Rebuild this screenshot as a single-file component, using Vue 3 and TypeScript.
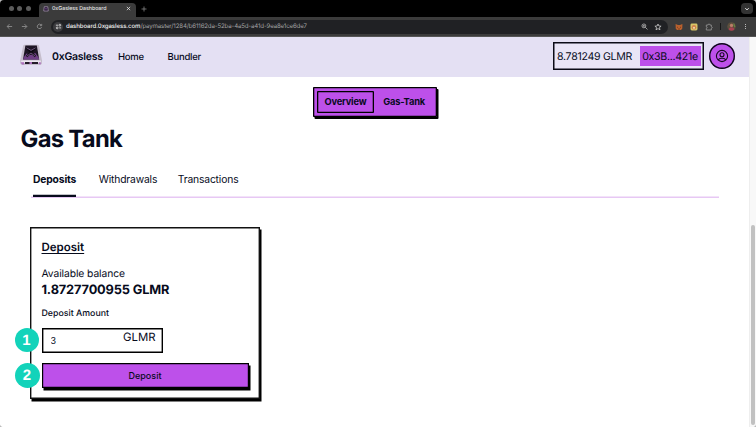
<script setup lang="ts">
import { ref } from 'vue'

const amount = ref('3')
const tabs = ['Deposits', 'Withdrawals', 'Transactions']
const activeTab = ref('Deposits')
const sections = ['Overview', 'Gas-Tank']
</script>

<template>
  <div class="window">
    <div class="tabstrip">
      <div class="lights"><i></i><i></i><i></i></div>
      <div class="browser-tab">
        <svg class="favicon" viewBox="0 0 12 12"><path d="M2.5 1.5h7l1 8.5h-9z" fill="#1c1524" stroke="#b9a3c9" stroke-width="1.3" /><path d="M4 4l4 3M8 4L4 7" stroke="#8a4fa8" /></svg>
        <span class="tab-title">0xGasless Dashboard</span>
        <svg class="close" viewBox="0 0 6 6"><path d="M1 1l4 4M5 1L1 5" /></svg>
      </div>
      <svg class="plus" viewBox="0 0 6 6"><path d="M3 .5v5M.5 3h5" /></svg>
      <div class="chevron"><svg viewBox="0 0 6 6"><path d="M1.3 2.2L3 3.9l1.7-1.7" /></svg></div>
    </div>

    <div class="toolbar">
      <svg class="nav" viewBox="0 0 8 8"><path d="M7 4H1.5M4 1.3L1.3 4 4 6.7" /></svg>
      <svg class="nav" viewBox="0 0 8 8"><path d="M1 4h5.5M4 1.3L6.7 4 4 6.7" /></svg>
      <svg class="nav" viewBox="0 0 8 8"><path d="M6.4 4.6A2.5 2.5 0 1 1 5.8 2.2M6.5 1v2H4.4" /></svg>
      <div class="address">
        <div class="site"><svg viewBox="0 0 8 8"><path d="M1 2.5h2.5M4.8 5.6H7" /><circle cx="5.5" cy="2.5" r="1" /><circle cx="2.5" cy="5.6" r="1" /></svg></div>
        <span class="url"><b>dashboard.0xgasless.com</b>/paymaster/1284/b61162da-52ba-4a5d-a41d-9ea8e1ce6de7</span>
        <svg class="zoom" viewBox="0 0 8 8"><circle cx="3.3" cy="3.3" r="2.2" /><path d="M4.9 4.9L7.4 7.4M2.3 3.3h2M3.3 2.3v2" /></svg>
        <svg class="star" viewBox="0 0 8 8"><path d="M4 1l.9 2 2.2.2-1.7 1.4.6 2.2L4 5.6 2 6.8l.6-2.2L.9 3.2 3.1 3z" /></svg>
      </div>
      <svg class="fox" viewBox="0 0 8 8"><path d="M.6 1l2.4 1h2l2.4-1-.1 4.5L6 7H2L.7 5.5z" fill="#b9602d" /><path d="M2 4l1 .6M6 4l-1 .6M3 6h2" stroke="#6b3a20" stroke-width=".8" /></svg>
      <svg class="bear" viewBox="0 0 8 8"><rect x=".5" y=".5" width="7" height="7" rx="1.4" fill="#d6c568" /><circle cx="4" cy="4.2" r="2.3" fill="#cf7f4a" /><circle cx="4" cy="4.8" r="1.1" fill="#ecd9a8" /></svg>
      <svg class="puzzle" viewBox="0 0 8 8"><path d="M1.3 2h1.8c0-1.4 1.8-1.4 1.8 0h1.4v1.7c1.3 0 1.3 1.6 0 1.6V7h-5V5.4c1.2 0 1.2-1.6 0-1.6z" /></svg>
      <i class="divider"></i>
      <svg class="profile" viewBox="0 0 8 8"><circle cx="4" cy="4" r="3.8" fill="#5d4f3d" /><circle cx="4" cy="3" r="1.5" fill="#b97f68" /><path d="M1.5 6.8C2 4 6 4 6.5 6.8 5 8 3 8 1.5 6.8" fill="#a84052" /><path d="M6 1.5l1 3" stroke="#638a43" /></svg>
      <div class="dots"><i></i><i></i><i></i></div>
    </div>

    <div class="viewport">
      <div class="page">
        <header class="header">
          <svg class="logo" viewBox="0 0 24 22">
            <path d="M5.6.8h12.9q1.3 0 1.6 1.2L23 16.3v3.5L21.5 21H3L1.2 19.8v-3.5L4.1 2Q4.4.8 5.6.8z" fill="#c6becd" />
            <path d="M6.4 1.6h11.4L20.2 15.6H4z" fill="#1d1524" />
            <path d="M4.6 13.5L7.5 9.5l4.3 1.6 4.5-2.2 3.5 4.8.4 1.9H4.2z" fill="#6e3f84" />
            <path d="M7.6 4l8.8 8.5M16.6 4l-9 8.5" stroke="#0d0912" stroke-width="1.8" />
            <path d="M7.6 3.8l4.4 2.6 4.6-2.6M8 12l4-3 4 3" stroke="#80668f" stroke-width=".8" />
            <path d="M2.2 16.6h19.6V19H2.2z" fill="#ece6f0" />
            <path d="M6 18h13v2H6z" fill="#241c2a" />
            <path d="M1.5 18.2h3.6v2.2H3zM10.5 18h2.5v2h-2.5zM19.8 18.2h2v2h-2z" fill="#ad70bd" />
          </svg>
          <span class="brand">0xGasless</span>
          <a class="home">Home</a>
          <a class="bundler">Bundler</a>
          <div class="wallet"><span class="balance">8.781249 GLMR</span><span class="account">0x3B...421e</span></div>
          <button class="avatar"><svg viewBox="0 0 14 14"><circle cx="7" cy="7" r="5.6" /><circle cx="7" cy="5.7" r="2" /><path d="M3.4 11C4 8.7 10 8.7 10.6 11" /></svg></button>
        </header>

        <nav class="switcher">
          <button v-for="(s, i) in sections" :key="s" :class="{ selected: i === 0 }">{{ s }}</button>
        </nav>

        <h1>Gas Tank</h1>

        <div class="tabs">
          <button v-for="t in tabs" :key="t" :class="{ active: t === activeTab }" @click="activeTab = t">{{ t }}</button>
        </div>

        <section class="card">
          <h2>Deposit</h2>
          <p class="label">Available balance</p>
          <p class="amount">1.8727700955 GLMR</p>
          <p class="field-label">Deposit Amount</p>
          <div class="field"><input v-model="amount" aria-label="Deposit Amount" /><span>GLMR</span></div>
          <button class="submit">Deposit</button>
          <span class="step one">1</span>
          <span class="step two">2</span>
        </section>
      </div>
      <div class="scrollbar"><i></i></div>
    </div>
  </div>
</template>

<style>
body { margin: 0; overflow: hidden; background: #bbb; }
</style>

<style scoped>
* { box-sizing: border-box; }
button, input { font: inherit; letter-spacing: inherit; color: inherit; padding: 0; margin: 0; border: 0; background: none; }
h1, h2, p { margin: 0; }
svg { display: block; flex: none; fill: none; }
.window { width: 756px; height: 427px; display: flex; flex-direction: column; font-family: Inter, sans-serif; color: #070b1c; overflow: hidden; border-radius: 4px; white-space: nowrap; text-rendering: geometricPrecision; }
.tabstrip { height: 17px; flex: none; background: #000; display: flex; align-items: center; }
.lights { display: flex; gap: 3.4px; margin-left: 9px; width: 30px; }
.lights i { width: 5px; height: 5px; border-radius: 50%; background: #5c5c5c; }
.browser-tab { width: 97px; height: 14px; margin-top: 3px; border-radius: 4px 4px 0 0; background: #3b3b3b; display: flex; align-items: center; padding: 0 4px 3px; }
.favicon { width: 6px; height: 6px; }
.tab-title { font-size: 5.3px; letter-spacing: -.05px; font-weight: 500; color: #e4e4e4; margin-left: 3px; width: 74px; }
.close { width: 5px; height: 5px; stroke: #eee; stroke-width: .9; }
.plus { width: 6px; height: 6px; margin-left: 5px; stroke: #999; stroke-width: .7; }
.chevron { width: 12px; height: 11px; border-radius: 4px; background: #333; margin-left: auto; margin-right: 3px; display: grid; place-items: center; }
.chevron svg { width: 6px; height: 6px; stroke: #eee; stroke-width: 1; }
.toolbar { height: 20px; flex: none; background: #3b3b3b; border-bottom: 1px solid #555; display: flex; align-items: center; padding-left: 6px; }
.nav { width: 7px; height: 7px; margin-right: 8px; stroke: #999; stroke-width: .9; }
.address { width: 617px; height: 14px; border-radius: 7px; background: #202124; display: flex; align-items: center; padding-left: 2px; }
.site { width: 10px; height: 10px; border-radius: 50%; background: #3c3c3f; display: grid; place-items: center; }
.site svg { width: 7px; height: 7px; stroke: #ddd; stroke-width: 1; }
.url { margin-left: 3px; font-size: 6.1px; letter-spacing: -.14px; color: #a5a5a5; }
.url b { color: #eee; font-weight: 500; letter-spacing: -.1px; }
.zoom { width: 7px; height: 7px; margin-left: auto; stroke: #bbb; stroke-width: .9; }
.star { width: 8px; height: 8px; margin-left: 6px; margin-right: 6px; stroke: #ccc; stroke-width: .8; }
.fox { width: 8px; height: 8px; margin-left: 7px; }
.bear { width: 8px; height: 8px; margin-left: 7px; }
.puzzle { width: 8px; height: 8px; margin-left: 7px; stroke: #999; stroke-width: .8; }
.divider { width: 1px; height: 7px; background: #161616; margin-left: 7px; }
.profile { width: 9px; height: 9px; margin-left: 6px; }
.dots { display: flex; flex-direction: column; gap: 1px; margin-left: 9px; }
.dots i { width: 1px; height: 1px; background: #bbb; }
.viewport { flex: 1; display: flex; min-height: 0; background: #fff; }
.page { width: 749px; background: #fff; }
.header { height: 39.5px; background: #e4e0f3; display: flex; align-items: center; padding-left: 19px; font-size: 9.5px; letter-spacing: -.25px; font-weight: 500; }
.logo { width: 24px; height: 22px; margin-top: -3px; }
.brand { width: 66px; margin-left: 9px; font-size: 10.5px; font-weight: 600; letter-spacing: -.26px; }
.home { width: 49.5px; }
.home, .bundler { padding-top: 1px; }
.wallet { height: 28px; width: 151px; margin: -1px 0 0 auto; box-shadow: inset 0 0 0 1.5px #0b0b16; display: flex; align-items: center; justify-content: space-between; padding: 0 3.5px 0 4px; font-size: 10.6px; letter-spacing: -.3px; font-weight: 400; background: #e9e5f6; }
.account { height: 20px; width: 61px; background: #bd50ea; display: grid; place-items: center; }
.avatar { width: 26px; height: 26px; box-shadow: inset 0 0 0 1.4px #0b0b16; border-radius: 50%; background: #bd50ea; margin: -2px 14px 0 5px; display: grid; place-items: center; }
.avatar svg { width: 14px; height: 14px; stroke: #160a20; stroke-width: 1.1; }
.switcher { width: 124.5px; height: 30px; margin: 10px 0 0 312.5px; padding: 4px; box-shadow: inset 0 0 0 1.3px #000, 1.5px 2px 0 #000; border-radius: 1px; background: #bd50ea; display: flex; font-size: 9.3px; letter-spacing: -.2px; font-weight: 700; }
.switcher button { width: 58.5px; height: 22px; border-radius: 1px; }
.switcher button:last-child { margin-left: .8px; }
.switcher .selected { box-shadow: inset 0 0 0 1.3px #000; }
h1 { font-size: 23.8px; line-height: 30px; font-weight: 700; margin: 7px 0 0 20.5px; letter-spacing: -.7px; }
.tabs { margin: 15px 0 0 31px; width: 688px; height: 29px; display: flex; gap: 20.5px; padding-left: 2px; box-shadow: inset 0 -1.6px #e7c8f4; font-size: 10.3px; letter-spacing: -.15px; }
.tabs button { height: 28px; padding-bottom: 7.5px; }
.tabs .active { font-weight: 700; margin-right: 2px; box-shadow: inset 0 -2.2px #070b1c; }
.card { position: relative; width: 230px; height: 172px; margin: 29px 0 0 30px; padding: 13px 11.5px 0; box-shadow: inset 0 0 0 1.4px #111, 1.5px 2.5px 0 #000; display: flex; flex-direction: column; align-items: flex-start; }
h2 { font-size: 11.5px; line-height: 16px; font-weight: 600; margin-top: -.5px; text-decoration: underline; text-underline-offset: 1.5px; text-decoration-thickness: 1px; }
.label { font-size: 10.3px; letter-spacing: -.08px; line-height: 14px; margin-top: 12px; }
.amount { font-size: 12.8px; letter-spacing: -.15px; line-height: 18px; font-weight: 700; margin-top: 1px; }
.field-label { font-size: 8.8px; line-height: 12px; margin-top: 8px; font-weight: 500; }
.field { width: 121.5px; height: 25px; margin-top: 7.5px; box-shadow: inset 0 0 0 1.4px #000; display: flex; padding: 0 7.5px 0 9px; }
.field input { width: 70px; font-size: 9px; outline: none; }
.field span { font-size: 11.4px; line-height: 19px; margin-left: auto; }
.submit { width: 207px; height: 25px; margin-top: 10px; background: #bd50ea; box-shadow: inset 0 0 0 1.2px #000, 1.5px 2.5px 0 #000; font-size: 9px; font-weight: 500; }
.step { position: absolute; width: 24px; height: 24px; border-radius: 50%; background: #13d3ba; color: #fff; display: grid; place-items: center; font-family: "Liberation Sans", sans-serif; font-size: 15px; font-weight: 700; line-height: 26px; }
.one { left: -15.5px; top: 101.5px; }
.two { left: -15.5px; top: 136px; width: 25px; height: 25px; }
.scrollbar { width: 7px; background: #f8f8f8; border-left: 1px solid #eee; padding: 188px 1px 0; }
.scrollbar i { display: block; width: 4px; height: 200px; border-radius: 2px; background: #c1c1c1; }
</style>
